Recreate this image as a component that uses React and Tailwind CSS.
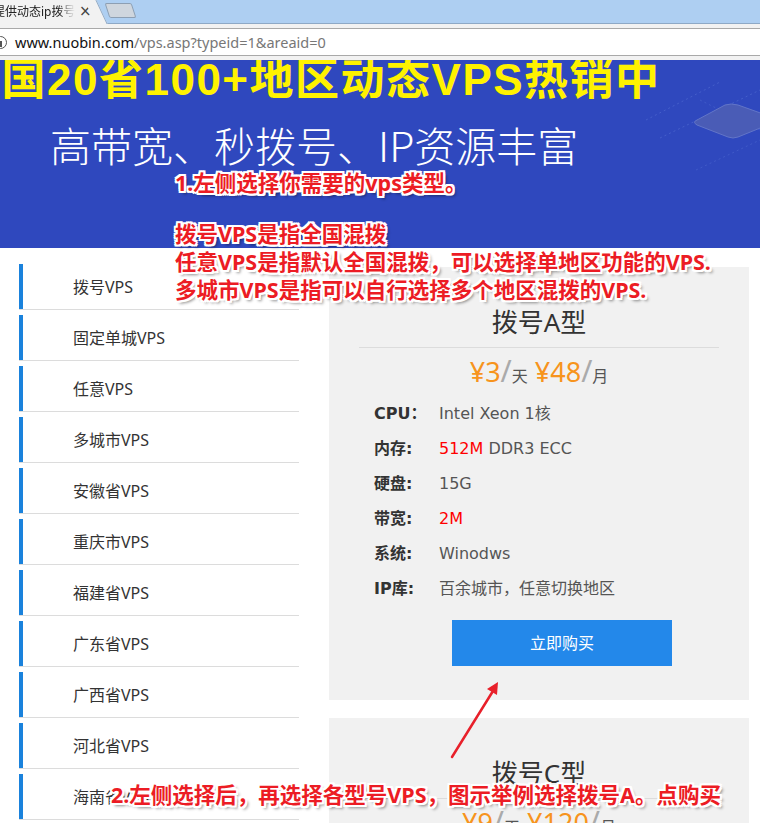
import React from "react";

const cjk = { fontFamily: '"Noto Sans", "Noto Sans CJK SC", sans-serif' };
const verd = { fontFamily: '"DejaVu Sans", "Noto Sans CJK SC", sans-serif' };

const sideItems = [
  "拨号VPS",
  "固定单城VPS",
  "任意VPS",
  "多城市VPS",
  "安徽省VPS",
  "重庆市VPS",
  "福建省VPS",
  "广东省VPS",
  "广西省VPS",
  "河北省VPS",
  "海南省VPS",
  "河南省VPS",
];

const outline =
  "[text-shadow:2px_0_0_#fff,-2px_0_0_#fff,0_2px_0_#fff,0_-2px_0_#fff,2px_2px_0_#fff,-2px_-2px_0_#fff,2px_-2px_0_#fff,-2px_2px_0_#fff,3px_3px_3px_rgba(0,0,0,0.45)]";

function Card({ title, day, month, rows }) {
  return (
    <div className="bg-[#f1f1f1] pt-[37px] px-[30px] pb-[34px]">
      <div className="text-[26px] leading-[36px] text-center text-[#333]" style={cjk}>
        {title}
      </div>
      <div className="h-px bg-[#dcdcdc] mt-[7px]" />
      <div className="mt-[5px] leading-[36px] text-center whitespace-nowrap" style={cjk}>
        <span className="text-[27px] text-[#f7941d]">¥{day}</span>
        <span className="text-[30px] text-[#aaa]">/</span>
        <span className="text-[16px] text-[#555]">天</span>
        <span className="text-[27px] text-[#f7941d]"> ¥{month}</span>
        <span className="text-[30px] text-[#aaa]">/</span>
        <span className="text-[16px] text-[#555]">月</span>
      </div>
      {rows && (
        <>
          <div className="mt-[2px] pl-[15px]">
            {rows.map((r) => (
              <div key={r.k} className="h-[35px] flex items-center text-[16px] whitespace-nowrap" style={verd}>
                <span className="w-[65px] font-bold text-[#333]">{r.k}</span>
                <span className="text-[#555]">{r.v}</span>
              </div>
            ))}
          </div>
          <div
            className="ml-[93px] mt-[14px] w-[220px] h-[46px] bg-[#2388ea] text-white text-[16px] flex items-center justify-center"
            style={cjk}
          >
            立即购买
          </div>
        </>
      )}
    </div>
  );
}

export default function App() {
  const rows = [
    { k: "CPU：", v: "Intel Xeon 1核" },
    {
      k: "内存:",
      v: (
        <>
          <span className="text-[#ff0000]">512M</span> DDR3 ECC
        </>
      ),
    },
    { k: "硬盘:", v: "15G" },
    { k: "带宽:", v: <span className="text-[#ff0000]">2M</span> },
    { k: "系统:", v: "Winodws" },
    { k: "IP库:", v: "百余城市，任意切换地区" },
  ];

  return (
    <div className="relative w-[760px] h-[823px] overflow-hidden bg-white">
      {/* Tab bar */}
      <div className="relative h-[24px] bg-[#aecff2] border-b border-[#8ea9c6]">
        <div className="absolute left-0 top-0 w-[97px] h-[24px] bg-[#f2f2f2] z-10">
          <div
            className="absolute left-[-7px] top-[4px] w-[82px] overflow-hidden whitespace-nowrap text-[12px] leading-[16px] text-[#222] [mask-image:linear-gradient(to_right,black_80%,transparent)]"
            style={cjk}
          >
            提供动态ip拨号VPS
          </div>
          <div className="absolute left-[79px] top-[4px] text-[15px] leading-[15px] text-[#444]" style={{ fontFamily: '"DejaVu Sans", sans-serif' }}>
            ×
          </div>
        </div>
        <div className="absolute left-[90px] top-0 w-[12px] h-[24px] bg-[#f2f2f2] border-r border-[#8ea9c6] skew-x-[25deg] z-10" />
        <div className="absolute left-[107px] top-[3px] w-[27px] h-[15px] bg-[#cfd6de] border border-[#8d9fb3] rounded-[2px] skew-x-[18deg]" />
      </div>
      {/* Toolbar */}
      <div className="h-[36px] bg-[#f2f2f2] pt-[4px]">
        <div className="h-[28px] bg-white border-y border-[#a9a9a9] flex items-center relative">
          <div className="absolute left-[-6px] top-[7px] w-[13px] h-[13px] rounded-full border border-[#555] flex items-center justify-center">
            <div className="w-[2px] h-[6px] bg-[#555] mt-[2px]" />
          </div>
          <div className="pl-[15px] text-[14.5px] leading-[20px] whitespace-nowrap" style={{ fontFamily: '"Noto Sans", sans-serif' }}>
            <span className="text-[#111]">www.nuobin.com</span>
            <span className="text-[#777]">/vps.asp?typeid=1&amp;areaid=0</span>
          </div>
        </div>
      </div>
      {/* Banner */}
      <div className="relative h-[188px] bg-[#2f48be] overflow-hidden">
        <svg className="absolute left-[640px] top-0" width="120" height="188" viewBox="640 0 120 188">
          <path d="M646 60 L720 22" stroke="#5a75d6" strokeWidth="1" strokeDasharray="2 3" opacity="0.5" />
          <path d="M660 78 L760 30" stroke="#5a75d6" strokeWidth="1" strokeDasharray="2 3" opacity="0.5" />
          <path d="M700 40 L760 70" stroke="#5a75d6" strokeWidth="1" strokeDasharray="2 3" opacity="0.4" />
          <path d="M696 110 L760 80" stroke="#5a75d6" strokeWidth="1" strokeDasharray="2 3" opacity="0.4" />
          <path
            d="M697 60 Q692 62 697 65 L728 77 Q733 79 738 77 L780 60 L738 45 Q731 43 725 45 Z"
            fill="#4a5cb6"
            stroke="#6275c8"
            strokeWidth="1"
          />
        </svg>
        <div
          className="relative ml-[-44px] mt-[-2px] text-[44px] leading-[44px] font-bold text-[#fff200] whitespace-nowrap tracking-[1.5px]"
          style={{ fontFamily: '"Liberation Sans", "Noto Sans CJK SC", sans-serif' }}
        >
          全国20省100+地区动态VPS热销中
        </div>
        <div
          className="relative pl-[50px] mt-[22px] text-[41px] leading-[41px] font-light text-white whitespace-nowrap"
          style={{ fontFamily: '"Noto Sans CJK SC", sans-serif' }}
        >
          高带宽、秒拨号、IP资源丰富
        </div>
      </div>
      {/* Main */}
      <div className="flex pl-[19px] gap-[30px]">
        <div className="w-[280px] pt-[11px] shrink-0">
          {sideItems.map((s) => (
            <div key={s} className="mt-[5px] border-b border-[#dcdcdc]">
              <div
                className="h-[45px] border-l-4 border-[#1a82dc] flex items-center pl-[50px] text-[16px] text-[#333]"
                style={cjk}
              >
                {s}
              </div>
            </div>
          ))}
        </div>
        <div className="w-[420px] pt-[19px] shrink-0">
          <Card title="拨号A型" day="3" month="48" rows={rows} />
          <div className="mt-[18px]">
            <Card title="拨号C型" day="9" month="120" rows={rows} />
          </div>
        </div>
      </div>

      {/* Annotations */}
      <div
        className={`absolute left-[175px] top-[169px] text-[21.5px] leading-[28px] font-bold text-[#ec1c24] whitespace-nowrap ${outline}`}
        style={cjk}
      >
        1.左侧选择你需要的vps类型。
      </div>
      <div
        className={`absolute left-[175px] top-[220px] text-[21.5px] leading-[28px] font-bold text-[#ec1c24] whitespace-nowrap ${outline}`}
        style={cjk}
      >
        <div>拨号VPS是指全国混拨</div>
        <div>任意VPS是指默认全国混拨，可以选择单地区功能的VPS.</div>
        <div>多城市VPS是指可以自行选择多个地区混拨的VPS.</div>
      </div>
      <div
        className={`absolute left-[111px] top-[781px] text-[21.5px] leading-[28px] font-bold text-[#ec1c24] whitespace-nowrap ${outline}`}
        style={cjk}
      >
        2.左侧选择后，再选择各型号VPS，图示举例选择拨号A。点购买
      </div>
      <svg className="absolute left-0 top-0 pointer-events-none" width="760" height="823">
        <line x1="452" y1="757" x2="493" y2="691" stroke="#e8202a" strokeWidth="2.5" strokeLinecap="round" />
        <polygon points="498,682 497,695 487,689" fill="#e8202a" />
      </svg>
    </div>
  );
}
